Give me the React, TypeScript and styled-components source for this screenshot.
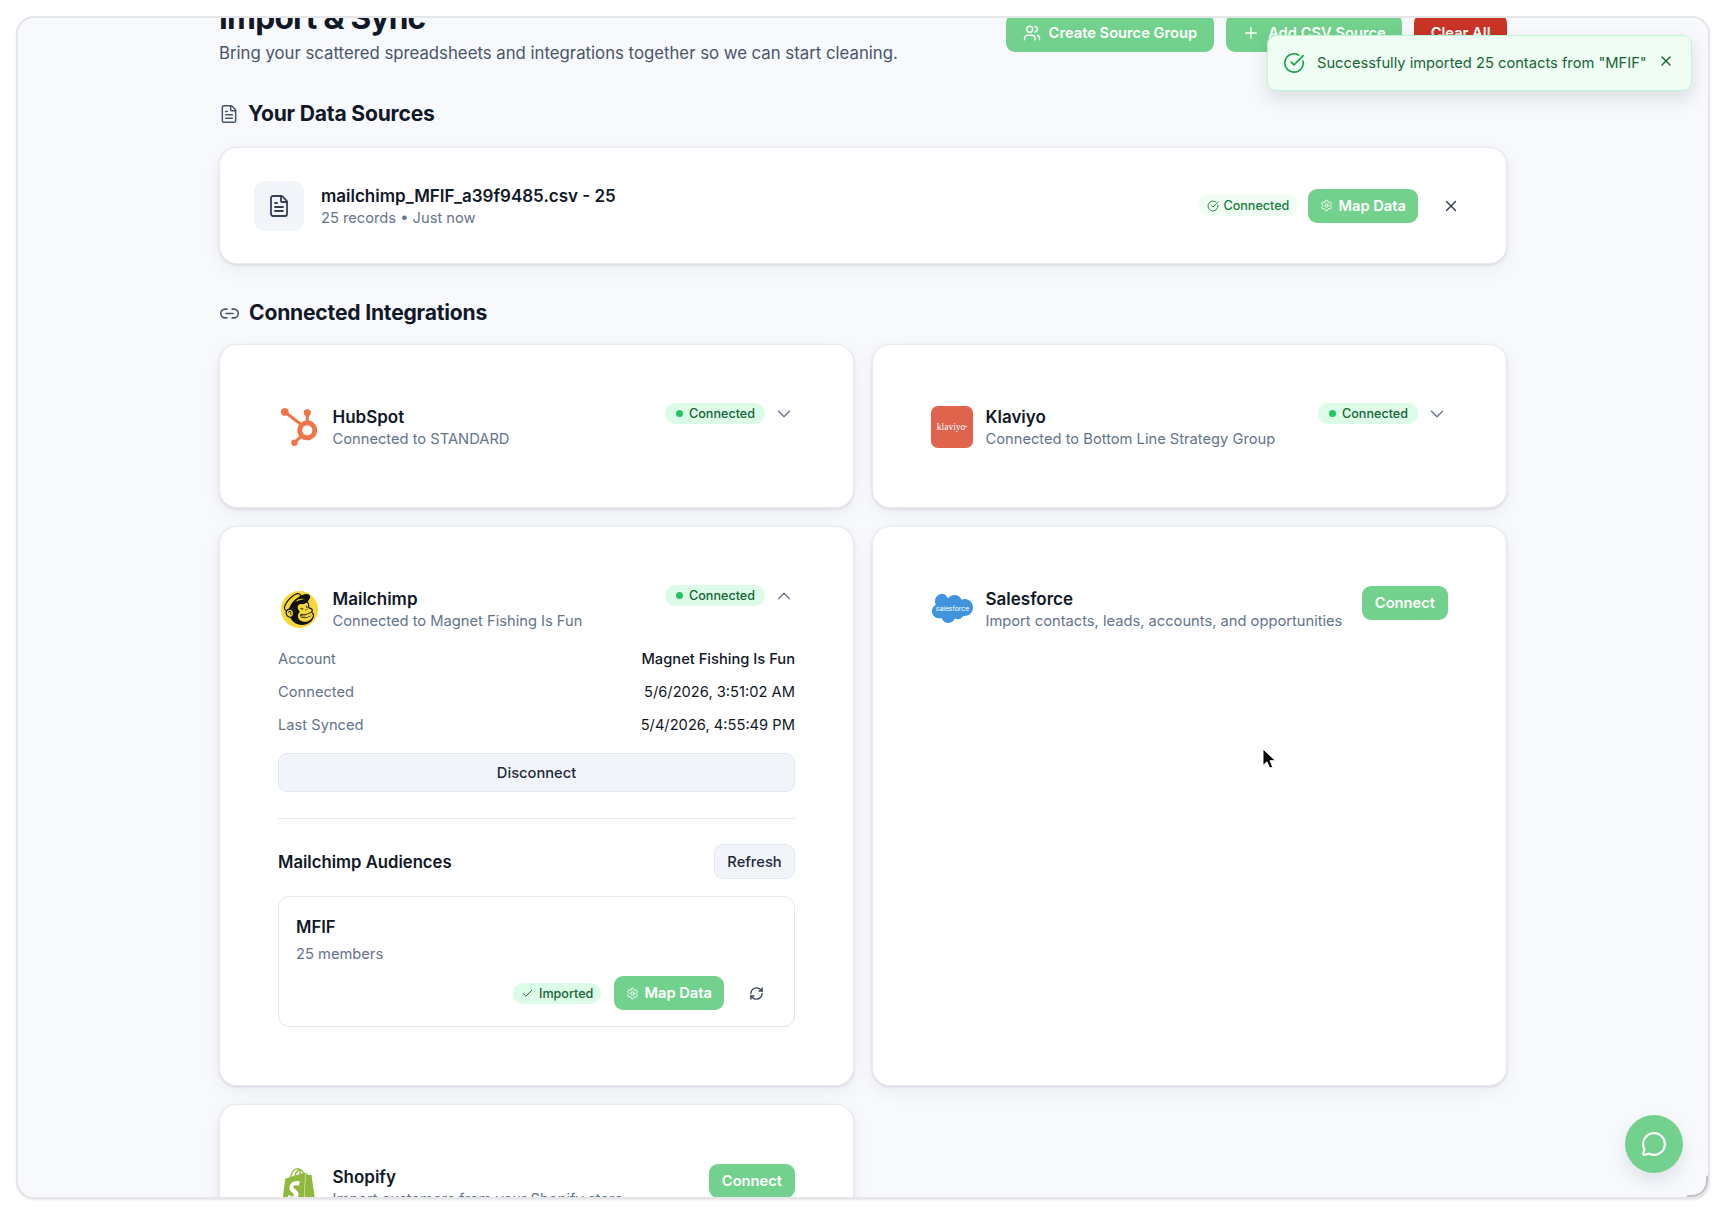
import React from "react";
import styled, { createGlobalStyle } from "styled-components";
import {
  Check,
  ChevronDown,
  ChevronUp,
  CircleCheckBig,
  FileText,
  Link2,
  MessageCircle,
  Plus,
  RefreshCw,
  Settings,
  Users,
  X,
} from "lucide-react";
import { SiHubspot, SiMailchimp, SiShopify } from "react-icons/si";

const GlobalStyle = createGlobalStyle`
  html, body {
    margin: 0;
    padding: 0;
    height: 100%;
    background: #ffffff;
    font-family: "Inter", "Liberation Sans", sans-serif;
    color: #111827;
    -webkit-font-smoothing: antialiased;
  }
  * {
    box-sizing: border-box;
  }
`;

export default function App() {
  return (
    <>
      <GlobalStyle />
      <Frame>
        <Page>
          <Header>
            <div>
              <Title>Import &amp; Sync</Title>
              <Subtitle>
                Bring your scattered spreadsheets and integrations together so
                we can start cleaning.
              </Subtitle>
            </div>
            <Actions>
              <HeaderButton>
                <Users size={18} strokeWidth={1.8} />
                Create Source Group
              </HeaderButton>
              <HeaderButton>
                <Plus size={18} strokeWidth={1.8} />
                Add CSV Source
              </HeaderButton>
              <HeaderButton $danger>Clear All</HeaderButton>
            </Actions>
          </Header>

          <SectionTitle $bottom={19}>
            <FileText size={20} strokeWidth={1.8} color="#475569" />
            Your Data Sources
          </SectionTitle>
          <SourceCard>
            <FileTile>
              <FileText size={24} strokeWidth={1.8} color="#334155" />
            </FileTile>
            <SourceText>
              <SourceName>mailchimp_MFIF_a39f9485.csv - 25</SourceName>
              <Muted>25 records • Just now</Muted>
            </SourceText>
            <SoftPill>
              <CircleCheckBig size={12} strokeWidth={1.8} />
              Connected
            </SoftPill>
            <GreenButton $pad={12}>
              <Settings size={13} strokeWidth={1.8} />
              Map Data
            </GreenButton>
            <IconButton>
              <X size={18} strokeWidth={1.8} color="#334155" />
            </IconButton>
          </SourceCard>

          <SectionTitle $top={35} $bottom={17}>
            <Link2 size={21} strokeWidth={1.8} color="#475569" />
            Connected Integrations
          </SectionTitle>
          <Grid>
            <Card>
              <CardRow>
                <Logo>
                  <SiHubspot size={38} color="#ef7549" />
                </Logo>
                <CardText>
                  <CardName>HubSpot</CardName>
                  <Muted>Connected to STANDARD</Muted>
                </CardText>
                <StatusPill>
                  <Dot />
                  Connected
                </StatusPill>
                <Toggle>
                  <ChevronDown size={22} strokeWidth={1.4} />
                </Toggle>
              </CardRow>
            </Card>

            <Card>
              <CardRow>
                <Logo>
                  <KlaviyoMark>
                    klaviyo<sup>▪</sup>
                  </KlaviyoMark>
                </Logo>
                <CardText>
                  <CardName>Klaviyo</CardName>
                  <Muted>Connected to Bottom Line Strategy Group</Muted>
                </CardText>
                <StatusPill>
                  <Dot />
                  Connected
                </StatusPill>
                <Toggle>
                  <ChevronDown size={22} strokeWidth={1.4} />
                </Toggle>
              </CardRow>
            </Card>

            <Card>
              <CardRow>
                <Logo>
                  <MailchimpMark>
                    <SiMailchimp size={32} color="#111111" />
                  </MailchimpMark>
                </Logo>
                <CardText>
                  <CardName>Mailchimp</CardName>
                  <Muted>Connected to Magnet Fishing Is Fun</Muted>
                </CardText>
                <StatusPill>
                  <Dot />
                  Connected
                </StatusPill>
                <Toggle>
                  <ChevronUp size={22} strokeWidth={1.4} />
                </Toggle>
              </CardRow>

              <Details>
                <DetailRow>
                  <span>Account</span>
                  <DetailValue $strong>Magnet Fishing Is Fun</DetailValue>
                </DetailRow>
                <DetailRow>
                  <span>Connected</span>
                  <DetailValue>5/6/2026, 3:51:02 AM</DetailValue>
                </DetailRow>
                <DetailRow>
                  <span>Last Synced</span>
                  <DetailValue>5/4/2026, 4:55:49 PM</DetailValue>
                </DetailRow>
              </Details>
              <DisconnectButton>Disconnect</DisconnectButton>
              <Divider />
              <AudienceHeader>
                <AudienceTitle>Mailchimp Audiences</AudienceTitle>
                <RefreshButton>Refresh</RefreshButton>
              </AudienceHeader>
              <AudienceBox>
                <AudienceName>MFIF</AudienceName>
                <AudienceCount>25 members</AudienceCount>
                <AudienceActions>
                  <ImportedPill>
                    <Check size={13} strokeWidth={1.8} />
                    Imported
                  </ImportedPill>
                  <GreenButton $pad={12}>
                    <Settings size={13} strokeWidth={1.8} />
                    Map Data
                  </GreenButton>
                  <SyncButton>
                    <RefreshCw size={15} strokeWidth={2.1} color="#334155" />
                  </SyncButton>
                </AudienceActions>
              </AudienceBox>
            </Card>

            <Card>
              <CardRow>
                <Logo>
                  <svg width="42" height="34" viewBox="0 0 42 32">
                    <path
                      fill="#3f94dd"
                      d="M17 5.4C18.4 3.4 20.700 2 23.300 2c3.300 0 6.100 2 7.300 4.800 1-.4 2-.7 3.200-.7 4.600 0 8.200 3.800 8.200 8.500s-3.600 8.500-8.200 8.500c-.6 0-1.100-.1-1.600-.2-1.100 2-3.200 3.300-5.500 3.300-1 0-1.900-.2-2.700-.6-1.100 2.700-3.700 4.400-6.600 4.400-3.100 0-5.700-2-6.700-4.800-.4.100-.9.100-1.400.1C4.300 25.700 1 22.300 1 18.200c0-2.800 1.500-5.200 3.700-6.500-.5-1-.7-2.200-.7-3.400C4 4.100 7.400.8 11.500.8c2.200 0 4.100 1.700 5.500 4.600z"
                    />
                    <SalesforceText x="21.500" y="17.500" textAnchor="middle">
                      salesforce
                    </SalesforceText>
                  </svg>
                </Logo>
                <CardText>
                  <CardName>Salesforce</CardName>
                  <Muted>Import contacts, leads, accounts, and opportunities</Muted>
                </CardText>
                <GreenButton>Connect</GreenButton>
              </CardRow>
            </Card>

            <Card>
              <CardRow>
                <Logo>
                  <SiShopify size={38} color="#8fb83e" />
                </Logo>
                <CardText>
                  <CardName>Shopify</CardName>
                  <Muted>Import customers from your Shopify store</Muted>
                </CardText>
                <GreenButton>Connect</GreenButton>
              </CardRow>
            </Card>
          </Grid>
        </Page>

        <Toast>
          <CircleCheckBig size={22} strokeWidth={1.8} color="#16a34a" />
          <ToastText>Successfully imported 25 contacts from "MFIF"</ToastText>
          <X size={16} strokeWidth={2} />
        </Toast>

        <ChatButton>
          <MessageCircle size={26} strokeWidth={2} color="#ffffff" />
        </ChatButton>

        <Cursor width="14" height="22" viewBox="0 0 14 22">
          <path
            d="M1 1v16.500l4-3.700 2.700 6.400 3-1.300-2.700-6.200h5.400z"
            fill="#000000"
            stroke="#ffffff"
            strokeWidth="1"
          />
        </Cursor>
      </Frame>
    </>
  );
}

const Frame = styled.div`
  position: relative;
  width: 1694px;
  height: 1183px;
  margin: 16px 0 0 16px;
  background: #f8f9fd;
  border: 2px solid #e4e6ea;
  border-radius: 18px;
  overflow: hidden;
  box-shadow: 0 1px 2px rgba(15, 23, 42, 0.1);
  &::after {
    content: "";
    position: absolute;
    right: 0;
    bottom: 0;
    width: 18px;
    height: 18px;
    border-right: 2px solid #bfc1c5;
    border-bottom: 2px solid #bfc1c5;
    border-bottom-right-radius: 16px;
    border-top: 2px solid transparent;
    border-left: 2px solid transparent;
  }
`;

const Page = styled.main`
  width: 1288px;
  margin: -20px auto 0;
`;

const Header = styled.header`
  display: flex;
  justify-content: space-between;
  align-items: flex-start;
  margin-bottom: 34px;
`;

const Title = styled.h1`
  margin: 0;
  font-size: 31.7px;
  line-height: 40px;
  font-weight: 700;
  letter-spacing: -0.8px;
  color: #111827;
`;

const Subtitle = styled.p`
  margin: 2px 0 0;
  font-size: 16.75px;
  line-height: 26px;
  color: #475569;
`;

const Actions = styled.div`
  display: flex;
  gap: 12px;
  padding-top: 15.5px;
`;

const HeaderButton = styled.button<{ $danger?: boolean }>`
  display: flex;
  align-items: center;
  gap: 8px;
  height: 38px;
  padding: 0 16.5px;
  border: none;
  border-radius: 9px;
  background: ${(p) => (p.$danger ? "#c93426" : "#72d18c")};
  color: #ffffff;
  font-family: inherit;
  font-size: 14.7px;
  font-weight: 600;
`;

const SectionTitle = styled.h2<{ $top?: number; $bottom: number }>`
  display: flex;
  align-items: center;
  gap: 9px;
  margin: ${(p) => p.$top ?? 0}px 0 ${(p) => p.$bottom}px;
  font-size: 21.1px;
  line-height: 28px;
  font-weight: 700;
  letter-spacing: -0.2px;
  color: #111827;
`;

const Panel = styled.section`
  background: #ffffff;
  border: 1px solid #e8ebf0;
  border-radius: 18px;
  box-shadow: 0 1px 3px rgba(15, 23, 42, 0.12), 0 6px 18px rgba(15, 23, 42, 0.05);
`;

const FileTile = styled.div`
  display: flex;
  align-items: center;
  justify-content: center;
  width: 50px;
  height: 50px;
  border-radius: 11px;
  background: #f1f5f9;
`;

const SourceText = styled.div`
  flex: 1;
  margin-left: 17px;
`;

const SourceName = styled.div`
  font-size: 17px;
  line-height: 24px;
  font-weight: 600;
  color: #111827;
`;

const Muted = styled.div`
  font-size: 14.7px;
  line-height: 20px;
  color: #64748b;
`;

const SoftPill = styled.span`
  display: flex;
  align-items: center;
  gap: 4px;
  height: 21px;
  padding: 0 9px;
  margin-right: 10px;
  border-radius: 11px;
  background: #f0fdf4;
  color: #15803d;
  font-size: 12.6px;
  font-weight: 500;
`;

const GreenButton = styled.button<{ $pad?: number }>`
  display: flex;
  align-items: center;
  gap: 5px;
  height: 34px;
  padding: 0 ${(p) => p.$pad ?? 13}px;
  border: none;
  border-radius: 9px;
  background: #72d18c;
  color: #ffffff;
  font-family: inherit;
  font-size: 14.7px;
  font-weight: 600;
  white-space: nowrap;
`;

const IconButton = styled.button`
  display: flex;
  align-items: center;
  justify-content: center;
  width: 42px;
  height: 34px;
  padding: 0;
  border: none;
  background: transparent;
`;

const SourceCard = styled(Panel)`
  display: flex;
  align-items: center;
  height: 117px;
  padding: 0 34px;
  ${IconButton} {
    margin-left: 12px;
  }
`;

const Grid = styled.div`
  display: grid;
  grid-template-columns: 635px 635px;
  gap: 18px;
`;

const Card = styled(Panel)`
  padding: 59px 58px 58px;
`;

const CardRow = styled.div`
  display: flex;
  align-items: flex-start;
  min-height: 45px;
`;

const Logo = styled.div`
  display: flex;
  align-items: center;
  justify-content: center;
  flex: none;
  width: 42px;
  height: 42px;
  margin: 2px 12.5px 0 0;
`;

const KlaviyoMark = styled.div`
  display: flex;
  align-items: center;
  justify-content: center;
  width: 42px;
  height: 42px;
  border-radius: 7px;
  background: #e0634b;
  color: #ffffff;
  font-family: "Liberation Serif", serif;
  font-size: 9.5px;
  sup {
    font-size: 5px;
    line-height: 0;
  }
`;

const MailchimpMark = styled.div`
  display: flex;
  align-items: center;
  justify-content: center;
  width: 37px;
  height: 37px;
  border-radius: 50%;
  background: #f6d839;
`;

const SalesforceText = styled.text`
  font-family: "Inter", sans-serif;
  font-size: 6.8px;
  fill: #ffffff;
`;

const CardText = styled.div`
  flex: 1;
`;

const CardName = styled.div`
  margin-bottom: -2px;
  font-size: 17px;
  line-height: 27px;
  font-weight: 600;
  color: #111827;
`;

const StatusPill = styled.span`
  display: flex;
  align-items: center;
  gap: 6px;
  height: 21px;
  margin-top: -1px;
  padding: 0 10px 0 11px;
  border-radius: 11px;
  background: #dcfce7;
  color: #166534;
  font-size: 12.6px;
  font-weight: 500;
`;

const Dot = styled.i`
  width: 7px;
  height: 7px;
  border-radius: 50%;
  background: #22c55e;
`;

const Toggle = styled.span`
  display: flex;
  height: 21px;
  align-items: center;
  margin: -1px 0 0 8px;
  color: #64748b;
`;

const Details = styled.dl`
  margin: 11px 0 0;
`;

const DetailRow = styled.div`
  display: flex;
  justify-content: space-between;
  align-items: center;
  height: 33.4px;
  font-size: 14.7px;
  color: #64748b;
`;

const DetailValue = styled.span<{ $strong?: boolean }>`
  color: #111827;
  font-weight: ${(p) => (p.$strong ? 500 : 400)};
`;

const DisconnectButton = styled.button`
  display: block;
  width: 100%;
  height: 39px;
  margin-top: 11px;
  border: 1px solid #e2e8f0;
  border-radius: 9px;
  background: #f1f5f9;
  color: #1e293b;
  font-family: inherit;
  font-size: 14.7px;
  font-weight: 500;
`;

const Divider = styled.hr`
  height: 1px;
  margin: 26px 0 25px;
  border: none;
  background: #e8ebf0;
`;

const AudienceHeader = styled.div`
  display: flex;
  align-items: center;
  justify-content: space-between;
`;

const AudienceTitle = styled.h3`
  margin: 0;
  font-size: 16.7px;
  font-weight: 600;
  color: #111827;
`;

const RefreshButton = styled.button`
  width: 81px;
  height: 35px;
  border: 1px solid #e2e8f0;
  border-radius: 9px;
  background: #f1f5f9;
  color: #1e293b;
  font-family: inherit;
  font-size: 14.7px;
  font-weight: 500;
`;

const AudienceBox = styled.div`
  height: 131px;
  margin-top: 17px;
  padding: 16px 17px;
  border: 1px solid #e2e8f0;
  border-radius: 11px;
  background: #ffffff;
`;

const AudienceName = styled.div`
  font-size: 16.7px;
  line-height: 28px;
  font-weight: 600;
  color: #111827;
`;

const AudienceCount = styled(Muted)`
  margin-top: 2px;
  line-height: 22px;
`;

const AudienceActions = styled.div`
  display: flex;
  align-items: center;
  justify-content: flex-end;
  gap: 13px;
  margin-top: 11px;
`;

const ImportedPill = styled(StatusPill)`
  gap: 5px;
  margin-top: 0;
  padding: 0 8px;
`;

const SyncButton = styled(IconButton)`
  width: 40px;
  padding-right: 2px;
`;

const Toast = styled.div`
  position: absolute;
  top: 17px;
  right: 16px;
  display: flex;
  align-items: center;
  width: 425px;
  height: 56px;
  padding: 0 17px 0 15px;
  border: 1px solid #bbf7d0;
  border-radius: 9px;
  background: #f0fdf4;
  color: #166534;
  box-shadow: 0 8px 18px rgba(15, 23, 42, 0.12);
  > svg:last-child {
    margin: -4px 0 0 auto;
  }
`;

const ToastText = styled.span`
  margin-left: 12px;
  font-size: 14.7px;
  font-weight: 400;
  white-space: nowrap;
`;

const ChatButton = styled.button`
  position: absolute;
  right: 25px;
  bottom: 24px;
  display: flex;
  align-items: center;
  justify-content: center;
  width: 58px;
  height: 58px;
  padding: 0;
  border: none;
  border-radius: 50%;
  background: #72d18c;
  box-shadow: 0 8px 18px rgba(15, 23, 42, 0.1);
`;

const Cursor = styled.svg`
  position: absolute;
  left: 1244px;
  top: 730px;
`;
